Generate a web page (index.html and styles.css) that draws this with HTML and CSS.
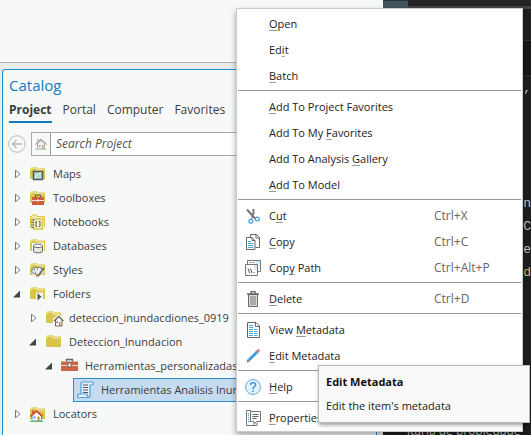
FILE: index.html
```html
<!DOCTYPE html>
<html lang="en">
<head>
<meta charset="utf-8">
<title>Catalog</title>
<link rel="stylesheet" href="styles.css">
</head>
<body>
<svg class="defs" aria-hidden="true">
  <symbol id="closed" viewBox="0 0 8 10"><path d="M2.500 1.200v7.600L7 5z" fill="#fff" stroke="#777"/></symbol>
  <symbol id="opened" viewBox="0 0 8 10"><path d="M7 1.500v7H0z" fill="#444"/></symbol>
  <symbol id="folder" viewBox="0 0 18 18"><path d="M1 3.500h1V2h6v1.500h8V14H1z" fill="#d9c44c"/><path d="M2 5.500V3h5l1 2h7" fill="none" stroke="#f4ecb8"/></symbol>
</svg>
<div class="screen">
  <main class="app">
    <div class="view"></div>
    <section class="catalog">
      <h1>Catalog</h1>
      <nav class="tabs">
        <button class="tab active">Project</button>
        <button class="tab">Portal</button>
        <button class="tab">Computer</button>
        <button class="tab">Favorites</button>
      </nav>
      <form class="search">
        <button class="back" type="button" aria-label="Back"><svg width="18" height="18" viewBox="0 0 18 18" fill="none" stroke="#bbb"><circle cx="9" cy="9" r="8.300"/><path d="M14 9H5M8.500 5L4.500 9l4 4" stroke-width="1.500"/></svg></button>
        <div class="field">
          <button class="home" type="button" aria-label="Home"><svg width="12" height="12" viewBox="0 0 12 12"><path d="M2.500 5.500v5.500h7V5.500L6 2.500z" fill="#f3f3ef" stroke="#aaa"/><path d="M.5 6.500L6 1.500l5.500 5M3 3.500V1" fill="none" stroke="#aaa" stroke-width="1.300"/><path d="M4 7h1.500v2H4z" fill="#aaa"/><path d="M7 7h1.500v4H7z" fill="#cda98c"/><path d="M0 11.500h12" stroke="#b9d8b9"/></svg></button>
          <input type="text" aria-label="Search Project" placeholder="Search Project">
        </div>
      </form>
      <ul class="tree">
        <li><div class="row"><svg class="arrow"><use href="#closed"/></svg><span class="node"><svg class="icon" viewBox="0 0 18 18"><use href="#folder"/><path d="M4.500 6.500h9v8h-9z" fill="#a9dcd4" stroke="#555" stroke-width="1.500"/><path d="M6 13l2-3 2-1 2-2" stroke="#e8f7f4" fill="none"/></svg>Maps</span></div></li>
        <li><div class="row"><svg class="arrow"><use href="#closed"/></svg><span class="node"><svg class="icon" viewBox="0 0 18 18"><use href="#folder"/><path d="M3 8h12v8H3z" fill="#cc5f3d"/><path d="M6.500 8V6h5v2" fill="none" stroke="#555"/><path d="M3 11.500h12M9 10v3" stroke="#f6e5df"/></svg>Toolboxes</span></div></li>
        <li><div class="row"><svg class="arrow"><use href="#closed"/></svg><span class="node"><svg class="icon" viewBox="0 0 18 18"><path d="M1.500 14V3.500H3V2h5v1.500h7.500V14" fill="#f3ecc0" stroke="#d9c44c"/><path d="M4.500 6h9v10h-9z" fill="#f7f1cd" stroke="#d9c44c" stroke-width="1.500"/><path d="M2 7h3M2 9.500h3M2 12h3M2 14.500h3" stroke="#666"/><path d="M8 8.500H7v5h1M10 8.500h1v5h-1" fill="none" stroke="#555"/></svg>Notebooks</span></div></li>
        <li><div class="row"><svg class="arrow"><use href="#closed"/></svg><span class="node"><svg class="icon" viewBox="0 0 18 18"><use href="#folder"/><path d="M3 6h12v9H3z" fill="#f7f9f9"/><path d="M4.500 9v5c0 2.500 9 2.500 9 0V9" fill="#e5e5e8" stroke="#666"/><ellipse cx="9" cy="8.800" rx="4.500" ry="1.800" fill="#fff" stroke="#666"/></svg>Databases</span></div></li>
        <li><div class="row"><svg class="arrow"><use href="#closed"/></svg><span class="node"><svg class="icon" viewBox="0 0 18 18"><use href="#folder"/><ellipse cx="8.500" cy="10.500" rx="6" ry="4.500" fill="#f7f9f9"/><path d="M3 9c1-3 8-4 10-1 1 2-2 2-1 4 0 2-3 3-6 1-2-1-4-2-3-4z" fill="#ececec" stroke="#666"/><path d="M15 7l-6 8" stroke="#666" stroke-width="1.500"/><path d="M5 9h1M8 8h1M6 11.500h1" stroke="#4a8bb5" stroke-width="1.500"/><path d="M7.500 15.500l2-2" stroke="#cc7a3d" stroke-width="2"/></svg>Styles</span></div></li>
        <li><div class="row"><svg class="arrow"><use href="#opened"/></svg><span class="node"><svg class="icon" viewBox="0 0 18 18"><use href="#folder"/><path d="M7 7.500h7V16H7z" fill="#f7f9f9"/><path d="M8.500 8v7.500l4-3.700z" fill="#555"/></svg>Folders</span></div>
          <ul>
            <li><div class="row"><svg class="arrow"><use href="#closed"/></svg><span class="node"><svg class="icon" viewBox="0 0 18 18"><use href="#folder"/><path d="M8 15V10l5.500-5 5 5v7H8z" fill="#f7f9f9"/><path d="M10.500 11v6h6.500v-6l-3.300-3.500z" fill="#fff" stroke="#666"/><path d="M9 12l4.700-4.700 4.700 4.700" fill="none" stroke="#666" stroke-width="1.300"/><path d="M14 13h1.500v4H14z" fill="#d97c42"/><path d="M11.500 12.500H13V14h-1.500z" fill="#555"/></svg>deteccion_inundacdiones_0919</span></div></li>
            <li><div class="row"><svg class="arrow"><use href="#opened"/></svg><span class="node"><svg class="icon" viewBox="0 0 18 18"><use href="#folder"/></svg>Deteccion_Inundacion</span></div>
              <ul>
                <li><div class="row"><svg class="arrow"><use href="#opened"/></svg><span class="node"><svg class="icon" viewBox="0 0 18 18"><path d="M0 4.500h17V14H0z" fill="#cc6546"/><path d="M5.500 4.500V2.500h6v2" fill="none" stroke="#666" stroke-width="1.500"/><path d="M0 8.500h17" stroke="#f0d4cb"/><path d="M7 6h3v4H7z" fill="#fff" stroke="#666"/></svg>Herramientas_personalizadas</span></div>
                  <ul>
                    <li><div class="row"><svg class="arrow"></svg><span class="node selected"><svg class="icon" viewBox="0 0 18 18"><path d="M4 13V3c0-2 1-2 2-2h9c2 0 2 3 0 3h-2v10c0 3-2 2.500-3 2.500H2c-2 0-2-3.500 0-3.500h8c0 2 0 3.500 2 3.500" fill="#e5f2fb" stroke="#4ba0da" stroke-width="1.200"/><path d="M6 4h5M6 6.500h5M6 9h5M6 11.500h5" stroke="#555"/></svg>Herramientas Analisis Inundacion</span></div></li>
                  </ul>
                </li>
              </ul>
            </li>
          </ul>
        </li>
        <li><div class="row"><svg class="arrow"><use href="#closed"/></svg><span class="node"><svg class="icon" viewBox="0 0 18 18"><use href="#folder"/><path d="M3 10.500V16h9.500v-5.500L7.500 6z" fill="#fff" stroke="#4d97bd"/><path d="M1.500 11.500l6-5.500 6 5.500M4 8V5.500" fill="none" stroke="#d94d37" stroke-width="1.800"/><path d="M4.500 11.500h2v2h-2z" fill="#4d97bd"/><path d="M8.500 11.500h2V16h-2z" fill="#d97c42"/><path d="M1 16.500h13" stroke="#63b463"/></svg>Locators</span></div></li>
      </ul>
    </section>
  </main>
  <aside class="editor">
    <div class="titlebar"><span class="chip"></span></div>
    <div class="strip"></div>
    <div class="strip dark"></div>
    <pre class="code"><span>l,</span>




<span>n</span>
<span>y.C</span>
<span>ne</span>
<span class="name">_d</span></pre>
    <p class="caption">itaria de propiedade</p>
  </aside>
</div>

<div class="menu" role="menu">
  <button role="menuitem"><span class="glyph"></span><span><u>O</u>pen</span></button>
  <button role="menuitem"><span class="glyph"></span><span>Ed<u>i</u>t</span></button>
  <button role="menuitem"><span class="glyph"></span><span><u>B</u>atch</span></button>
  <hr>
  <button role="menuitem"><span class="glyph"></span><span><u>A</u>dd To Project Favorites</span></button>
  <button role="menuitem"><span class="glyph"></span><span>Add To My <u>F</u>avorites</span></button>
  <button role="menuitem"><span class="glyph"></span><span>Add To Analysis <u>G</u>allery</span></button>
  <button role="menuitem"><span class="glyph"></span><span><u>A</u>dd To Model</span></button>
  <hr>
  <button role="menuitem"><svg class="glyph" viewBox="0 0 16 16"><path d="M2 1.500l8 9M8.500 1v4L7 9" fill="none" stroke="#777" stroke-width="2"/><path d="M8 8l-2 4" stroke="#777"/><circle cx="5.800" cy="13.300" r="1.900" fill="#fff" stroke="#3b9ddb" stroke-width="1.200"/><circle cx="12.300" cy="11" r="1.900" fill="#fff" stroke="#3b9ddb" stroke-width="1.200"/></svg><span>C<u>u</u>t</span><kbd>Ctrl+X</kbd></button>
  <button role="menuitem"><svg class="glyph" viewBox="0 0 16 16"><path d="M5.500 3V.5h6l3 3v10h-4M11 .5V4h3.500" fill="#fff" stroke="#666"/><path d="M1.500 3.500H7l3 3v9H1.500z" fill="#fff" stroke="#666"/><path d="M7 3.500v3h3" fill="none" stroke="#666"/><path d="M3 7.500h3M3 9.500h5.500M3 11.500h5.500M3 13.500h5.500" stroke="#4ca6de"/></svg><span><u>C</u>opy</span><kbd>Ctrl+C</kbd></button>
  <button role="menuitem"><svg class="glyph" viewBox="0 0 16 16"><path d="M2.500 4V.5h13v11H13" fill="#fff" stroke="#777"/><path d="M5 2.500h1.500M8 2.500h1.500" stroke="#777"/><path d="M11 1h4v3h-4z" fill="#d4ebf8"/><path d="M.5 4.500h12v11H.5z" fill="#fff" stroke="#777"/><path d="M9 5h3v5H9z" fill="#d4ebf8"/><path d="M3 8.500l1.500 4.500M5.500 8.500L7 13M8.500 12.500h1" fill="none" stroke="#555"/></svg><span>Cop<u>y</u> Path</span><kbd>Ctrl+Alt+P</kbd></button>
  <hr>
  <button role="menuitem"><svg class="glyph" viewBox="0 0 16 16"><path d="M3.500 3.500h9v12h-9z" fill="#ddd" stroke="#666"/><path d="M2 3h12M6 2.500v-2h4v2" fill="none" stroke="#666" stroke-width="1.300"/><path d="M6 5v9M8 5v9M10 5v9" stroke="#777"/></svg><span><u>D</u>elete</span><kbd>Ctrl+D</kbd></button>
  <hr>
  <button role="menuitem"><svg class="glyph" viewBox="0 0 16 16"><path d="M2.500.5H11l3.500 3.500v11.500h-12z" fill="#fff" stroke="#666"/><path d="M10.500.5v4h4" fill="none" stroke="#666"/><path d="M4 3.500h5M4 5.500h5M4 7.500h8.500M4 9.500h8.500M4 11.500h8.500M4 13.500h8.500" stroke="#4ca6de" stroke-dasharray="4 1"/></svg><span>View <u>M</u>etadata</span></button>
  <button role="menuitem"><svg class="glyph" viewBox="0 0 16 16"><path d="M4 12L12.500 3.500" stroke="#3f9bdc" stroke-width="3"/><path d="M1.500 14.500l1-3.500 2.500 2.500z" fill="#777"/><path d="M11.500 4.500l1.500-1.500" stroke="#999" stroke-width="3"/><path d="M12.700 3.300l1.500-1.500" stroke="#d98070" stroke-width="3"/></svg><span><u>E</u>dit Metadata</span></button>
  <hr>
  <button role="menuitem"><svg class="glyph" viewBox="0 0 16 16"><circle cx="8" cy="8" r="7.500" fill="#e3f2fb" stroke="#68b0df"/><path d="M5.500 6C5.500 2.500 11 3 10.500 6.200 10.200 8 8 7.800 8 10.200" fill="none" stroke="#2f90d0" stroke-width="1.400"/><circle cx="8" cy="12.300" r=".9" fill="#2f90d0"/></svg><span><u>H</u>elp</span></button>
  <hr>
  <button role="menuitem"><svg class="glyph" viewBox="0 0 16 16"><path d="M12 12.500v3H1.500V.5H6" fill="#fff" stroke="#777"/><path d="M5.500 1.500h10v10h-4l-2.500 3v-3H5.500z" fill="#fff" stroke="#777"/><path d="M7.500 4.500h6M7.500 6.500h6M7.500 8.500h4" stroke="#666"/><path d="M3 3.500h1M3 5.500h1M3 7.500h1M3 9.500h1M3 11.500h4" stroke="#4ca6de"/></svg><span><u>P</u>roperties</span></button>
</div>
<div class="tooltip" role="tooltip"><strong>Edit Metadata</strong><span>Edit the item's metadata</span></div>
</body>
</html>
```
FILE: styles.css
```css
* { box-sizing: border-box; }

body {
  margin: 0;
  height: 100vh;
  position: relative;
  overflow: hidden;
  font: 11px/24px "Open Sans", sans-serif;
  color: #3c3c3c;
}

button, input {
  font: inherit;
  color: inherit;
  background: none;
  border: 0;
  padding: 0;
  margin: 0;
}

.defs { display: none; }

.screen {
  display: grid;
  grid-template-columns: minmax(0, 383fr) minmax(0, 148fr);
  height: 100%;
}

.app {
  display: flex;
  flex-direction: column;
  min-height: 0;
  background: #eaebeb;
  padding: 0 6px 0 2px;
}

.view {
  height: 63px;
  flex: none;
  margin: 0 -6px 6px -2px;
  background: #f7f9f9;
  border-bottom: 1px solid #b4b5b5;
}

.catalog {
  flex: 1;
  min-height: 0;
  overflow: hidden;
  background: #f7f9f9;
  border: 1px solid #1f8dcf;
  border-bottom: 0;
  border-radius: 3px 3px 0 0;
}

h1 {
  margin: 3px 0 0 6px;
  font-size: 15px;
  font-weight: 400;
  line-height: 24px;
  color: #0f7cc1;
}

.tabs {
  display: flex;
  gap: 11px;
  padding-left: 6px;
  font-size: 12px;
}

.tab {
  height: 26px;
  line-height: 26px;
  border-bottom: 2px solid transparent;
}

.tab.active {
  font-weight: 700;
  border-color: #0f7cc1;
}

.search {
  display: flex;
  align-items: center;
  gap: 5px;
  margin: 9px 0 6px 5px;
}

.back, .back svg { display: block; }

.field {
  flex: 1;
  display: flex;
  height: 24px;
  border: 1px solid #aaa;
  background: #fff;
}

.home {
  display: grid;
  place-items: center;
  width: 19px;
  background: #f7f9f9;
  border-right: 1px solid #999;
}

.field input {
  flex: 1;
  min-width: 0;
  padding-left: 5px;
  font-size: 12px;
}

.field input::placeholder {
  color: #555;
  font-style: italic;
  opacity: 1;
}

ul {
  list-style: none;
  margin: 0;
  padding: 0;
}

.tree { padding-left: 10px; }
.tree ul { padding-left: 16px; }

.row {
  display: flex;
  align-items: center;
  height: 24px;
}

.arrow {
  width: 8px;
  height: 10px;
  margin-right: 4px;
  flex: none;
}

.node {
  flex: 1;
  display: flex;
  align-items: center;
  gap: 6px;
  height: 24px;
  padding-left: 3px;
  border: 1px solid transparent;
  white-space: nowrap;
}

.node.selected {
  background: #c5dbef;
  border-color: #2b8fd0;
}

.icon {
  width: 18px;
  height: 18px;
  flex: none;
  overflow: visible;
}

.editor {
  display: flex;
  flex-direction: column;
  overflow: hidden;
  background: #1e1e1e;
  color: #c8c8c8;
}

.titlebar {
  flex: none;
  height: 9px;
  background: #252526;
  border-bottom: 3px solid #444;
}

.chip {
  display: block;
  width: 25px;
  height: 9px;
  background: #43545e;
  border-top: 1px solid #24323a;
}

.strip {
  flex: none;
  height: 32px;
  border-bottom: 1px solid #333;
}

.strip.dark {
  height: 35px;
  background: #171717;
}

.code {
  flex: 1;
  margin: 1px 0 0;
  font: 13px/23px "Liberation Mono", monospace;
  text-align: right;
}

.name { color: #d7ba6d; }

.caption {
  margin: 0 0 -8px 24px;
  font: 12px/24px "Open Sans", sans-serif;
  white-space: nowrap;
}

.menu {
  position: absolute;
  left: 236px;
  top: 8px;
  width: 287px;
  padding: 2px 1px 0;
  background: #fff;
  border: 1px solid #c9cbcd;
  box-shadow: 0 3px 6px rgba(0, 0, 0, 0.35);
  color: #222;
}

.menu button {
  display: flex;
  align-items: center;
  width: 100%;
  height: 26px;
  padding-left: 7px;
  text-align: left;
}

.menu hr {
  height: 1px;
  margin: 1px 0 3px;
  border: 0;
  background: #999;
}

.glyph {
  width: 16px;
  height: 16px;
  margin-right: 8px;
  flex: none;
}

.menu u {
  text-decoration-color: #999;
  text-decoration-thickness: 1px;
  text-underline-offset: 2px;
}

.menu kbd {
  width: 87px;
  margin-left: auto;
  font: inherit;
  font-size: 12px;
  color: #666;
}

.tooltip {
  position: absolute;
  left: 318px;
  top: 365px;
  width: 212px;
  padding: 4px 7px;
  display: grid;
  background: #f9f9f9;
  border: 1px solid #bbb;
  box-shadow: 1px 2px 4px rgba(0, 0, 0, 0.4);
  color: #222;
}

.tooltip strong { color: #111; }
```
